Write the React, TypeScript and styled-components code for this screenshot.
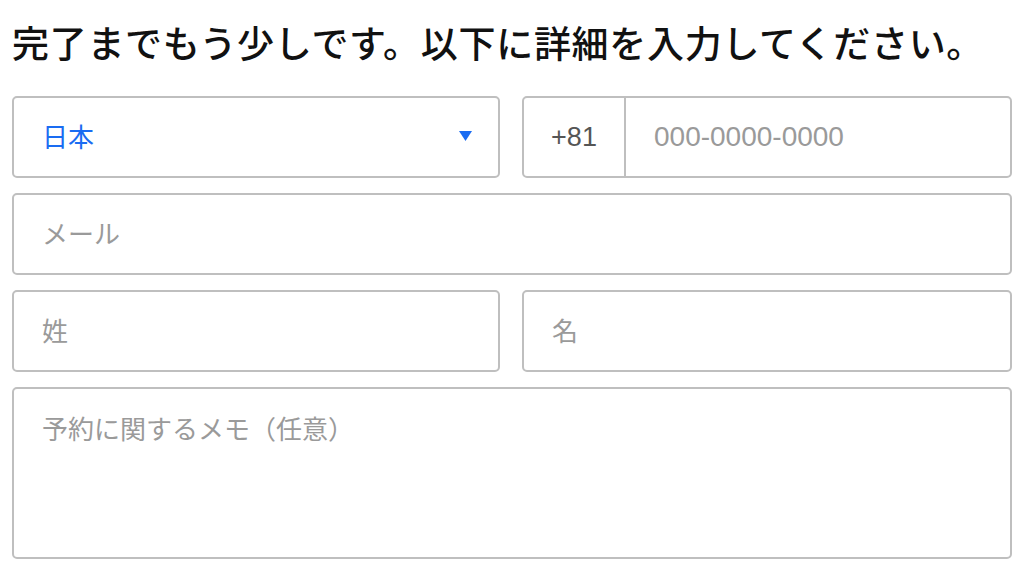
import React from 'react';
import styled, { createGlobalStyle } from 'styled-components';

const GlobalStyle = createGlobalStyle`
  html, body {
    margin: 0;
    padding: 0;
    background: #ffffff;
  }
  body {
    font-family: "Liberation Sans", "Noto Sans CJK JP", sans-serif;
  }
`;

const Page = styled.div`
  width: 1024px;
  padding: 0 12px;
  box-sizing: border-box;
`;

const Title = styled.h1`
  margin: 0;
  padding: 24px 0 0;
  height: 96px;
  box-sizing: border-box;
  font-family: "Noto Sans CJK JP", sans-serif;
  font-size: 37px;
  line-height: 37px;
  font-weight: 500;
  color: #111111;
  letter-spacing: 0.7px;
`;

const Form = styled.div`
  display: flex;
  flex-direction: column;
  gap: 15px;
`;

const Row = styled.div`
  display: grid;
  grid-template-columns: 488px 1fr;
  column-gap: 22px;
`;

const Box = styled.div<{ $tall?: boolean }>`
  height: ${(p) => (p.$tall ? '172px' : '82px')};
  border: 2px solid #bfbfbf;
  border-radius: 5px;
  box-sizing: border-box;
  display: flex;
  align-items: ${(p) => (p.$tall ? 'flex-start' : 'center')};
  padding: ${(p) => (p.$tall ? '19px 28px 0' : '0 28px 3px')};
  font-size: 27px;
  background: #fff;
`;

const Placeholder = styled.span`
  color: #9a9a9a;
  font-family: "Noto Sans CJK JP", sans-serif;
  font-size: 26px;
  line-height: 40px;
`;

const Digits = styled.span`
  color: #9a9a9a;
  font-family: "Liberation Sans", sans-serif;
  font-size: 28px;
`;

const SelectBox = styled(Box)`
  justify-content: space-between;
  padding-right: 26px;
`;

const Country = styled.span`
  color: #1a6cf2;
  font-family: "Noto Sans CJK JP", sans-serif;
  font-size: 26px;
`;

const PhoneBox = styled(Box)`
  padding: 0;
`;

const Code = styled.div`
  width: 100px;
  height: 100%;
  display: flex;
  align-items: center;
  justify-content: center;
  border-right: 2px solid #bfbfbf;
  color: #555555;
  font-size: 27px;
`;

const PhoneInput = styled.div`
  flex: 1;
  padding-left: 28px;
`;

function Caret() {
  return (
    <svg width="13" height="10" viewBox="0 0 13 10">
      <path d="M0 0 H13 L6.5 10 Z" fill="#1a6cf2" />
    </svg>
  );
}

export default function App() {
  return (
    <Page>
      <GlobalStyle />
      <Title>完了までもう少しです。以下に詳細を入力してください。</Title>
      <Form>
        <Row>
          <SelectBox>
            <Country>日本</Country>
            <Caret />
          </SelectBox>
          <PhoneBox>
            <Code>+81</Code>
            <PhoneInput>
              <Digits>000-0000-0000</Digits>
            </PhoneInput>
          </PhoneBox>
        </Row>
        <Box>
          <Placeholder>メール</Placeholder>
        </Box>
        <Row>
          <Box>
            <Placeholder>姓</Placeholder>
          </Box>
          <Box>
            <Placeholder>名</Placeholder>
          </Box>
        </Row>
        <Box $tall>
          <Placeholder>予約に関するメモ（任意）</Placeholder>
        </Box>
      </Form>
    </Page>
  );
}
